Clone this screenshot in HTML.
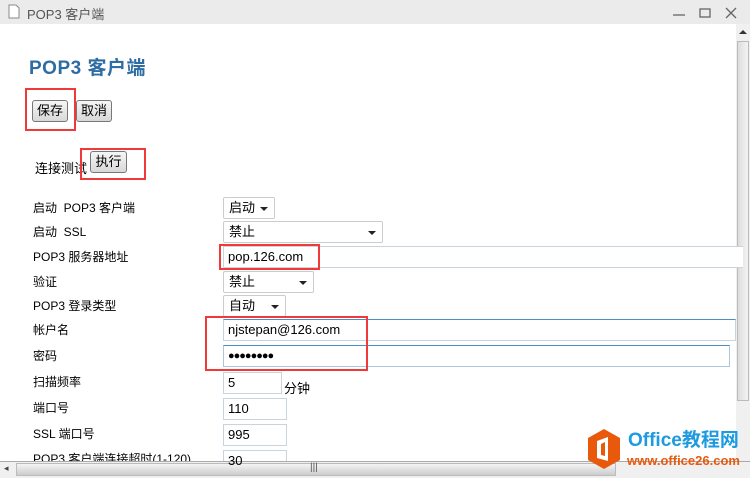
<!DOCTYPE html><html><head><meta charset="utf-8"><style>
*{box-sizing:border-box}body{margin:0;width:750px;height:478px;overflow:hidden;background:#fff;font-family:"Liberation Sans","Noto Sans CJK SC",sans-serif;font-size:13px;color:#000;position:relative}
.a{position:absolute}
.tb{left:0;top:0;width:750px;height:24px;background:#ebebeb;color:#555;font-size:13px}
.btn{position:absolute;height:22px;border:1px solid #777;border-radius:3px;background:linear-gradient(#f6f6f6,#d8d8d8);font-size:13px;line-height:20px;text-align:center}
.red{position:absolute;border:2px solid #f03a3a}
.lab{position:absolute;left:33px;font-size:12px;line-height:14px}
.in{position:absolute;height:22px;border:1px solid #c9d4dc;background:#fff;padding-left:4px;line-height:20px;font-size:13px}
.sel{position:absolute;height:22px;border:1px solid #ccc;border-radius:2px;background:#fff;padding-left:5px;line-height:20px}
.sel:after{content:"";position:absolute;right:6px;top:9px;border:4px solid transparent;border-top:4px solid #222}
</style></head><body>
<div class="a tb"><svg class="a" style="left:8px;top:4px" width="12" height="15"><path d="M1 1h7l3 3v10H1z" fill="#fff" stroke="#888"/></svg><span class="a" style="left:27px;top:4px">POP3 客户端</span>
<svg class="a" style="left:670px;top:6px" width="80" height="14"><path d="M3 9h12" stroke="#666" stroke-width="1.3"/><rect x="30" y="3" width="10" height="8" fill="none" stroke="#666" stroke-width="1.3"/><path d="M56 2l10 10M66 2l-10 10" stroke="#666" stroke-width="1.3"/></svg></div>
<div class="a" style="left:736px;top:24px;width:14px;height:437px;background:#f0f0f0"><div class="a" style="left:1px;top:17px;width:12px;height:360px;background:linear-gradient(90deg,#ddd,#f4f4f4);border:1px solid #bbb"></div><div class="a" style="left:3px;top:6px;border:4px solid transparent;border-bottom:4px solid #333;border-top:0"></div></div>
<div class="a" style="left:0;top:461px;width:750px;height:17px;background:#f0f0f0;border-top:1px solid #aaa"><div class="a" style="left:16px;top:1px;width:600px;height:13px;background:linear-gradient(#f4f4f4,#ccc);border:1px solid #bbb"></div><span class="a" style="left:310px;top:0;font-size:10px;color:#555">|||</span><span class="a" style="left:4px;top:1px;font-size:9px;color:#444">◂</span></div>
<div class="a" style="left:29px;top:53px;font-size:19px;font-weight:bold;color:#2e6da4;letter-spacing:0.5px">POP3 客户端</div>
<div class="btn" style="left:32px;top:100px;width:36px">保存</div>
<div class="btn" style="left:76px;top:100px;width:36px">取消</div>
<div class="red" style="left:25px;top:88px;width:51px;height:43px"></div>
<div class="a" style="left:35px;top:158px;font-size:13px">连接测试</div>
<div class="btn" style="left:90px;top:151px;width:37px">执行</div>
<div class="red" style="left:80px;top:148px;width:66px;height:32px"></div>
<div class="lab" style="top:201px">启动&nbsp; POP3 客户端</div><div class="sel" style="left:223px;top:197px;width:52px">启动</div>
<div class="lab" style="top:225px">启动&nbsp; SSL</div><div class="sel" style="left:223px;top:221px;width:160px">禁止</div>
<div class="lab" style="top:250px">POP3 服务器地址</div><div class="in" style="left:223px;top:246px;width:520px;border-right:0">pop.126.com</div>
<div class="lab" style="top:275px">验证</div><div class="sel" style="left:223px;top:271px;width:91px">禁止</div>
<div class="lab" style="top:299px">POP3 登录类型</div><div class="sel" style="left:223px;top:295px;width:63px">自动</div>
<div class="lab" style="top:323px">帐户名</div><div class="in" style="left:223px;top:319px;width:513px;border-color:#4a8fc4 #c9d4dc #c9d4dc #c9d4dc">njstepan@126.com</div>
<div class="lab" style="top:349px">密码</div><div class="in" style="left:223px;top:345px;width:507px;border-color:#4a8fc4 #a9c8de #a9c8de #a9c8de;font-size:11px;letter-spacing:-1px">●●●●●●●●</div>
<div class="red" style="left:205px;top:316px;width:163px;height:55px"></div>
<div class="red" style="left:219px;top:244px;width:101px;height:26px"></div>
<div class="lab" style="top:375px">扫描频率</div><div class="in" style="left:223px;top:372px;width:59px">5</div><span class="a" style="left:284px;top:378px">分钟</span>
<div class="lab" style="top:401px">端口号</div><div class="in" style="left:223px;top:398px;width:64px">110</div>
<div class="lab" style="top:427px">SSL 端口号</div><div class="in" style="left:223px;top:424px;width:64px">995</div>
<div class="lab" style="top:452px;height:9px;overflow:hidden">POP3 客户端连接超时(1-120)</div><div class="in" style="left:223px;top:450px;width:64px;height:11px;border-bottom:0">30</div>
<svg class="a" style="left:586px;top:428px" width="36" height="42"><path d="M18 1l16 9v22l-16 9-16-9V10z" fill="#e8590c"/><path d="M11 13l11-4v24l-11-3zM15 16v11l4 1V14z" fill="#fff"/></svg>
<div class="a" style="left:628px;top:430px;font-size:19px;font-weight:bold;color:#1e9be0;line-height:22px">Office教程网</div>
<div class="a" style="left:627px;top:454px;font-size:13px;font-weight:bold;color:#e8590c;line-height:14px">www.office26.com</div>
</body></html>
